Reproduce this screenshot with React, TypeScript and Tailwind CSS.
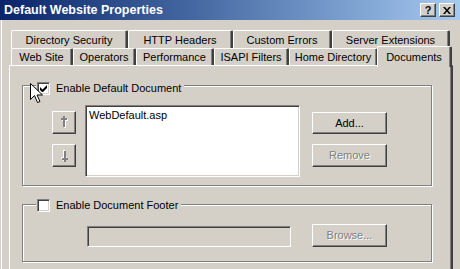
import React from "react"

const row1 = [
  { label: "Directory Security", w: "w-[117px]" },
  { label: "HTTP Headers", w: "w-[105px]" },
  { label: "Custom Errors", w: "w-[99px]" },
  { label: "Server Extensions", w: "w-[118px]" },
]

const row2 = [
  { label: "Web Site", w: "w-[62px]" },
  { label: "Operators", w: "w-[63px]" },
  { label: "Performance", w: "w-[78px]" },
  { label: "ISAPI Filters", w: "w-[75px]" },
  { label: "Home Directory", w: "w-[89px]" },
]

const raised =
  "border border-t-white border-l-white border-r-[#404040] border-b-[#404040] shadow-[inset_-1px_-1px_0_#808080] bg-[#d4d0c8]"

const sunken =
  "border border-t-[#808080] border-l-[#808080] border-r-white border-b-white shadow-[inset_1px_1px_0_#404040,inset_-1px_-1px_0_#d4d0c8]"

const etched =
  "border border-[#808080] shadow-[1px_1px_0_#fff,inset_1px_1px_0_#fff]"

const disabledText = "text-[#808080] [text-shadow:1px_1px_0_#fff]"

function Tab({ label, w }: { label: string; w: string }) {
  return (
    <div
      className={`${w} h-full shrink-0 border-l border-t border-white rounded-tl-[2px] border-r-2 border-r-[#404040] rounded-tr-[2px] shadow-[inset_-1px_0_0_#808080] flex items-center justify-center pt-px`}
    >
      {label}
    </div>
  )
}

function Checkbox({ checked }: { checked?: boolean }) {
  return (
    <div className={`w-[13px] h-[13px] bg-white ${sunken} flex items-center justify-center`}>
      {checked && (
        <svg width="7" height="7" viewBox="0 0 7 7">
          <path d="M0 2v3l2 2h1l4-4V0L2.5 4.5z" fill="#000" />
        </svg>
      )}
    </div>
  )
}

// disabled up/down arrow glyph, gray with a white emboss
const arrowPath = "M3 0h2v11H3zM1 2h6v2H1z"

function ArrowButton({ down }: { down?: boolean }) {
  return (
    <div className={`w-[24px] h-[23px] ${raised} flex items-center justify-center`}>
      <svg width="9" height="13" viewBox="0 0 9 13" className={down ? "rotate-180" : ""}>
        <g transform="translate(1 1)">
          <path d={arrowPath} fill="#fff" />
        </g>
        <path d={arrowPath} fill="#808080" />
      </svg>
    </div>
  )
}

function PushButton({ label, disabled, h }: { label: string; disabled?: boolean; h: string }) {
  return (
    <div className={`w-[75px] ${h} ${raised} flex items-center justify-center ${disabled ? disabledText : "text-black"}`}>
      {label}
    </div>
  )
}

export default function App() {
  return (
    <div className="w-[460px] h-[269px] overflow-hidden relative bg-[#d4d0c8] text-[11px] leading-none text-black font-['Liberation_Sans',Arial,sans-serif]">

      {/* title bar */}
      <div className="h-[20px] flex items-center pl-[4px] pr-[5px] bg-gradient-to-r from-[#0a246a] to-[#a6caf0]">
        <span className="text-white font-bold text-[12.5px]">Default Website Properties</span>
        <div className="ml-auto flex gap-[3px]">
          <div className={`w-[16px] h-[14px] ${raised} flex items-center justify-center font-bold text-[11px]`}>?</div>
          <div className={`w-[16px] h-[14px] ${raised} flex items-center justify-center`}>
            <svg width="8" height="7" viewBox="0 0 8 7">
              <path d="M0 0h2l2 2.5L6 0h2L5 3.5 8 7H6L4 4.5 2 7H0l3-3.5z" fill="#000" />
            </svg>
          </div>
        </div>
      </div>

      <div className="border-l border-white h-[249px] ml-px">

        {/* tabs */}
        <div className="pl-[9px] pt-[10px]">
          <div className="flex h-[18px]">
            {row1.map((t) => (
              <Tab key={t.label} label={t.label} w={t.w} />
            ))}
          </div>
          <div className="flex h-[17px]">
            {row2.map((t) => (
              <Tab key={t.label} label={t.label} w={t.w} />
            ))}
            <div className="relative z-10 self-start -mt-[2px] -ml-[1px] w-[75px] h-[21px] bg-[#d4d0c8] border-l border-t border-white rounded-tl-[2px] border-r-2 border-r-[#404040] rounded-tr-[2px] shadow-[inset_-1px_0_0_#808080] flex justify-center pt-[5px]">
              Documents
            </div>
          </div>
        </div>

        {/* panel */}
        <div className="ml-[7px] w-[444px] h-[220px] border-l border-t border-white border-r-2 border-r-[#404040] shadow-[inset_-1px_0_0_#808080]">

          <div className={`ml-[12px] mt-[19px] w-[410px] h-[101px] ${etched}`}>
            <div className="-mt-[4px] ml-[13px] pl-px pr-[3px] w-fit bg-[#d4d0c8] flex items-center gap-[6px]">
              <Checkbox checked />
              <span>Enable Default Document</span>
            </div>
            <div className="flex items-start pl-[29px]">
              <div className="mt-[16px] flex flex-col gap-[10px]">
                <ArrowButton />
                <ArrowButton down />
              </div>
              <div className={`ml-[9px] mt-[10px] w-[215px] h-[72px] bg-white ${sunken} px-[3px] pt-[4px]`}>
                WebDefault.asp
              </div>
              <div className="ml-[12px] mt-[17px] flex flex-col gap-[10px]">
                <PushButton label="Add..." h="h-[22px]" />
                <PushButton label="Remove" h="h-[23px]" disabled />
              </div>
            </div>
          </div>

          <div className={`ml-[12px] mt-[18px] w-[410px] h-[58px] ${etched}`}>
            <div className="-mt-[6px] ml-[13px] pl-px pr-[3px] w-fit bg-[#d4d0c8] flex items-center gap-[6px]">
              <Checkbox />
              <span>Enable Document Footer</span>
            </div>
            <div className="flex items-start pl-[64px]">
              <div className={`mt-[14px] w-[204px] h-[21px] ${sunken}`} />
              <div className="ml-[21px] mt-[12px]">
                <PushButton label="Browse..." h="h-[23px]" disabled />
              </div>
            </div>
          </div>

        </div>
      </div>

      {/* mouse pointer */}
      <svg className="absolute left-[30px] top-[83px]" width="13" height="21" viewBox="0 0 13 21">
        <path d="M0.5 0.5v16l4-4 3 7 2.5-1-3-6.5h5.5z" fill="#fff" stroke="#000" strokeWidth="1" />
      </svg>
    </div>
  )
}
